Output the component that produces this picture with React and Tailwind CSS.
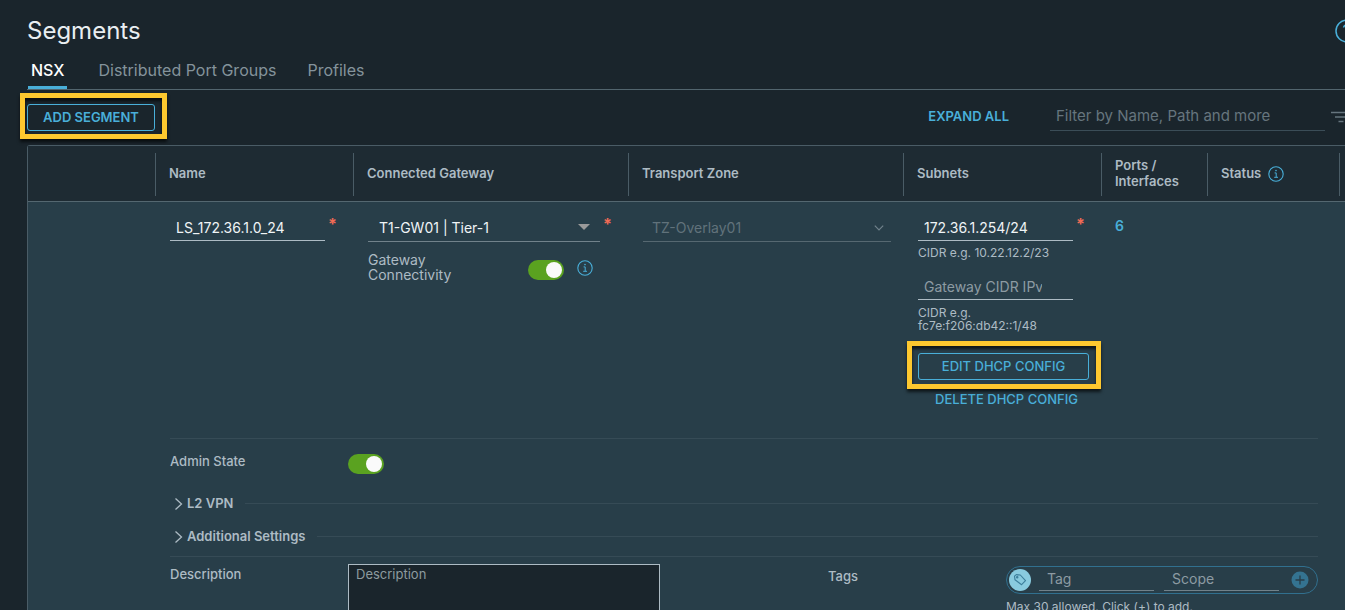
import { useState } from "react";

function InfoIcon({ className }) {
  return (
    <svg viewBox="0 0 16 16" fill="none" stroke="currentColor" className={className} aria-hidden="true">
      <circle cx="8" cy="8" r="7.2" strokeWidth="1.1" />
      <path d="M6.6 6.9h1.6v4.3M6.2 11.3h3.8" strokeWidth="1" />
      <circle cx="8" cy="4.6" r="0.8" fill="currentColor" stroke="none" />
    </svg>
  );
}

function Toggle({ label, id }) {
  const [on, setOn] = useState(true);
  return (
    <input
      type="checkbox"
      role="switch"
      id={id}
      aria-label={label}
      checked={on}
      onChange={() => setOn(!on)}
      className="h-5 w-9 shrink-0 cursor-pointer appearance-none rounded-full bg-[#6b7b84] before:m-[2px] before:block before:size-4 before:rounded-full before:bg-[#fafafa] checked:bg-[#5aa220] checked:before:ml-[18px]"
    />
  );
}

function Required() {
  return <span className="text-base leading-4 font-bold text-[#f26b55]">*</span>;
}

function Highlight({ className }) {
  return (
    <span
      aria-hidden="true"
      className={`pointer-events-none absolute border-[5px] border-[#fdc82f] shadow-[0_3px_3px_rgba(0,0,0,0.65),inset_0_3px_3px_rgba(0,0,0,0.65)] ${className}`}
    />
  );
}

function HeaderCell({ children, first }) {
  return (
    <th scope="col" className="border-b border-[#546770] p-0 pt-[7px] pb-[5px] text-left align-top text-[13px] leading-4 font-semibold">
      <div className={`flex h-[43px] items-center gap-[7px] pb-1 pl-[13px] ${first ? "" : "border-l border-[#4a5c66]"}`}>
        {children}
      </div>
    </th>
  );
}

function SectionToggle({ children }) {
  return (
    <div className="flex h-[33px] items-center gap-3">
      <button type="button" className="flex items-center gap-1 pb-[2px] pl-1 text-[13px] leading-4 font-semibold">
        <svg viewBox="0 0 9 14" className="mt-[3px] h-[14px] w-[9px]" fill="none" stroke="currentColor" strokeWidth="1.3" aria-hidden="true">
          <path d="M1.5 1.5 7.5 7l-6 5.500" />
        </svg>
        {children}
      </button>
      <span className="h-px flex-1 bg-[#364b56]" />
    </div>
  );
}

const textInput =
  "h-[25px] w-[155px] border-b border-[#adbbc4] bg-transparent pb-[2px] pl-[6px] text-sm leading-5 text-[#f0f4f6] outline-none placeholder:text-[#8d9ba3]";

export default function App() {
  return (
    <div className="flex h-screen flex-col overflow-hidden bg-[#1a252c] font-['Inter',sans-serif] text-[#adbbc4]">
      <header className="flex items-center justify-between pt-[15px] pl-[27px]">
        <h1 className="text-2xl leading-8 font-normal text-[#e9eef1]">Segments</h1>
        <button type="button" aria-label="Help" className="-mr-[14px] shrink-0 text-[#49afd9]">
          <svg viewBox="0 0 24 24" className="size-6" fill="none" stroke="currentColor" strokeWidth="1.5" aria-hidden="true">
            <circle cx="12" cy="12" r="11" />
            <path d="M8.500 8.500C9 6.800 10.300 6 12 6c2 0 3.500 1.200 3.500 3 0 2.500-3.500 2.700-3.500 5.500M12 17v1.500" />
          </svg>
        </button>
      </header>

      <nav className="ml-[27px] flex h-[43px] shrink-0 items-stretch gap-[31px] border-b border-[#52656e] text-base leading-5">
        <a href="#nsx" className="ml-px border-b-[3px] border-[#49afd9] px-[3px] pt-[13px] font-medium text-white">NSX</a>
        <a href="#port-groups" className="pt-[13px] text-[#84939b]">Distributed Port Groups</a>
        <a href="#profiles" className="pt-[13px] text-[#84939b]">Profiles</a>
      </nav>

      <div className="flex h-[55px] shrink-0 items-center pb-px pl-[27px]">
        <div className="relative">
          <button type="button" className="block h-[27px] w-32 rounded-[3px] border border-[#49afd9] pb-px text-[13px] leading-4 font-semibold text-[#49afd9]">
            ADD SEGMENT
          </button>
          <Highlight className="-top-[11px] -right-3 -bottom-2 -left-[7px]" />
        </div>
        <button type="button" className="mr-[41px] ml-auto pb-[2px] text-[13px] leading-4 font-semibold text-[#49afd9]">EXPAND ALL</button>
        <input
          type="text"
          aria-label="Filter"
          placeholder="Filter by Name, Path and more"
          className="h-7 w-[275px] border-b border-[#3b4d57] bg-transparent pb-[2px] pl-[6px] text-[15px] leading-5 outline-none placeholder:text-[#66757e]"
        />
        <button type="button" aria-label="Filter options" className="-mr-[6px] ml-[6px] shrink-0 text-[#66757e]">
          <svg viewBox="0 0 20 12" className="h-3 w-5" fill="none" stroke="currentColor" strokeWidth="1.7" aria-hidden="true">
            <path d="M0 1.500h20M4 6h12M7.500 10.500h5" />
          </svg>
        </button>
      </div>

      <main className="ml-[27px]">
        <div className="rounded-tl-[3px] border-t border-l border-[#4a5c66] bg-[#283e49]">
          <table className="w-full table-fixed border-separate border-spacing-0">
            <colgroup>
              <col className="w-[127px]" />
              <col className="w-[198px]" />
              <col />
              <col />
              <col className="w-[198px]" />
              <col className="w-[106px]" />
              <col className="w-[132px]" />
              <col className="w-[6px]" />
            </colgroup>
            <thead className="bg-[#1e2b33]">
              <tr>
                <HeaderCell first />
                <HeaderCell>Name</HeaderCell>
                <HeaderCell>Connected Gateway</HeaderCell>
                <HeaderCell>Transport Zone</HeaderCell>
                <HeaderCell>Subnets</HeaderCell>
                <HeaderCell>
                  <span>Ports /<br />Interfaces</span>
                </HeaderCell>
                <HeaderCell>
                  Status
                  <InfoIcon className="mt-[2px] size-4 text-[#49afd9]" />
                </HeaderCell>
                <th className="border-b border-[#546770] p-0 pt-[7px] pb-[5px]">
                  <div className="h-[43px] border-l border-[#4a5c66]" />
                </th>
              </tr>
            </thead>
            <tbody>
              <tr className="align-top">
                <td />
                <td className="p-0 pt-[14px] pl-[15px]">
                  <div className="flex items-start gap-[3px]">
                    <input aria-label="Name" type="text" defaultValue="LS_172.36.1.0_24" className={textInput} />
                    <Required />
                  </div>
                </td>
                <td className="p-0 pt-[14px] pl-[15px]">
                  <div className="flex items-start gap-[3px] pr-4">
                    <div className="relative min-w-0 flex-1">
                      <select aria-label="Connected Gateway" className="block h-[26px] w-full appearance-none border-b border-[#71828b] bg-transparent pb-px pl-[11px] text-sm leading-5 text-[#f0f4f6] outline-none">
                        <option>T1-GW01 | Tier-1</option>
                      </select>
                      <svg viewBox="0 0 12 6" className="pointer-events-none absolute top-2 right-[10px] h-[6px] w-3 fill-[#9a9a9a]" aria-hidden="true">
                        <path d="M0 0h12L6 6z" />
                      </svg>
                    </div>
                    <Required />
                  </div>
                  <div className="mt-[10px] flex">
                    <label htmlFor="gateway-connectivity" className="w-40 text-sm leading-[15px]">
                      Gateway<br />Connectivity
                    </label>
                    <div className="flex items-start gap-[13px] pt-2">
                      <Toggle id="gateway-connectivity" label="Gateway Connectivity" />
                      <InfoIcon className="size-4 text-[#49afd9]" />
                    </div>
                  </div>
                </td>
                <td className="p-0 pt-[14px] pr-3 pl-[15px]">
                  <div className="relative">
                    <select disabled aria-label="Transport Zone" className="block h-[26px] w-full appearance-none border-b border-[#566871] bg-transparent pb-px pl-[9px] text-sm leading-5 text-[#61727b] opacity-100">
                      <option>TZ-Overlay01</option>
                    </select>
                    <svg viewBox="0 0 10 6" className="pointer-events-none absolute top-[9px] right-[7px] h-[6px] w-[10px]" fill="none" stroke="#71828b" strokeWidth="1.2" aria-hidden="true">
                      <path d="M.8.700 5 5 9.200.700" />
                    </svg>
                  </div>
                </td>
                <td className="p-0 pt-[14px] pl-[15px]">
                  <div className="flex items-start gap-[3px]">
                    <input aria-label="Gateway CIDR IPv4" type="text" defaultValue="172.36.1.254/24" className={textInput} />
                    <Required />
                  </div>
                  <p className="mt-[5px] text-xs leading-[13px]">CIDR e.g. 10.22.12.2/23</p>
                  <input aria-label="Gateway CIDR IPv6" type="text" placeholder="Gateway CIDR IPv6" className={`${textInput} mt-4 block pr-[31px]`} />
                  <p className="mt-[6px] text-xs leading-[13px]">
                    CIDR e.g.<br />fc7e:f206:db42::1/48
                  </p>
                  <div className="relative mt-[21px] w-[171px]">
                    <button type="button" className="block h-[27px] w-full rounded-[3px] border border-[#49afd9] pb-px text-[13px] leading-4 font-medium text-[#49afd9]">
                      EDIT DHCP CONFIG
                    </button>
                    <Highlight className="-top-3 -right-3 -bottom-[9px] -left-[11px]" />
                  </div>
                  <button type="button" className="mt-[11px] mb-[31px] block w-[177px] text-center text-[13px] leading-4 font-medium text-[#49afd9]">
                    DELETE DHCP CONFIG
                  </button>
                </td>
                <td className="p-0 pt-4 pl-[14px]">
                  <a href="#ports" className="block text-sm leading-4 font-semibold text-[#49afd9]">6</a>
                </td>
                <td />
                <td />
              </tr>
              <tr>
                <td colSpan={8} className="p-0 pr-[27px] pl-[142px]">
                  <div className="flex h-[49px] border-t border-[#364b56] pt-[15px] text-[13px]">
                    <label htmlFor="admin-state" className="-mt-px w-[178px] leading-4 font-medium">Admin State</label>
                    <Toggle id="admin-state" label="Admin State" />
                  </div>
                  <SectionToggle>L2 VPN</SectionToggle>
                  <SectionToggle>Additional Settings</SectionToggle>
                  <div className="mt-[3px] flex border-t border-[#364b56] pt-[7px] text-[13px]">
                    <label htmlFor="description" className="w-[178px] pt-[2px] leading-4 font-medium">Description</label>
                    <textarea
                      id="description"
                      placeholder="Description"
                      className="h-20 w-[312px] resize-none border border-[#adbbc4] bg-[#1a252c] px-[7px] py-px text-[13px] leading-4 outline-none placeholder:text-[#8d9b9f]"
                    />
                    <span className="ml-auto w-[178px] pt-1 leading-4 font-medium">Tags</span>
                    <div className="w-[312px] pt-[2px]">
                      <div className="flex h-7 items-center rounded-full border border-[#31708f] pr-2 pl-[2px]">
                        <span className="flex size-[22px] shrink-0 items-center justify-center rounded-full bg-[#89cbdf]">
                          <svg viewBox="0 0 14 14" className="size-[14px]" fill="none" stroke="#3c7f9b" strokeWidth="1.1" strokeLinejoin="round" aria-hidden="true">
                            <path d="M1.500 3.200 3.300 1.600l4 .4 5.200 5.700-3.900 4L2 6.800z" />
                            <circle cx="4.200" cy="4.200" r=".7" />
                          </svg>
                        </span>
                        <input aria-label="Tag" type="text" placeholder="Tag" className="ml-2 h-[22px] w-0 flex-1 border-b border-[#71828b] bg-transparent pb-[2px] pl-2 text-sm leading-5 outline-none placeholder:text-[#8d9ba3]" />
                        <input aria-label="Scope" type="text" placeholder="Scope" className="ml-[10px] h-[22px] w-0 flex-1 border-b border-[#71828b] bg-transparent pb-[2px] pl-2 text-sm leading-5 outline-none placeholder:text-[#8d9ba3]" />
                        <button type="button" aria-label="Add tag" className="ml-3 shrink-0">
                          <svg viewBox="0 0 18 18" className="size-[18px]" aria-hidden="true">
                            <circle cx="9" cy="9" r="8.500" fill="#347391" />
                            <path d="M9 4.500v9M4.500 9h9" stroke="#283e49" strokeWidth="1.300" />
                          </svg>
                        </button>
                      </div>
                      <p className="mt-[6px] text-xs leading-[13px]">Max 30 allowed. Click (+) to add.</p>
                    </div>
                  </div>
                </td>
              </tr>
            </tbody>
          </table>
        </div>
      </main>
    </div>
  );
}
